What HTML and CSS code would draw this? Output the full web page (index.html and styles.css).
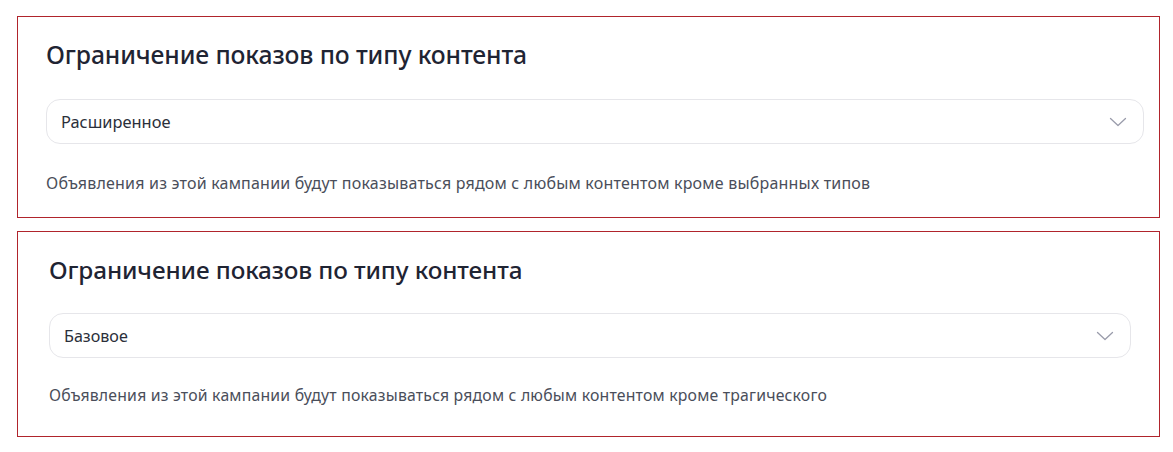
FILE: index.html
```html
<!DOCTYPE html>
<html lang="ru">
<head>
<meta charset="utf-8">
<link rel="stylesheet" href="styles.css">
</head>
<body>
<main class="page">
  <section class="card card-first">
    <h2 class="card-title">Ограничение показов по типу контента</h2>
    <div class="select">
      <span class="select-value">Расширенное</span>
      <svg class="chevron" width="18" height="10" viewBox="0 0 18 10"><polyline points="1.5,1.5 9,8.5 16.5,1.5" fill="none" stroke="#9a9cab" stroke-width="1.3" stroke-linecap="round" stroke-linejoin="round"/></svg>
    </div>
    <p class="card-note">Объявления из этой кампании будут показываться рядом с любым контентом кроме выбранных типов</p>
  </section>
  <section class="card card-second">
    <h2 class="card-title">Ограничение показов по типу контента</h2>
    <div class="select">
      <span class="select-value">Базовое</span>
      <svg class="chevron" width="18" height="10" viewBox="0 0 18 10"><polyline points="1.5,1.5 9,8.5 16.5,1.5" fill="none" stroke="#9a9cab" stroke-width="1.3" stroke-linecap="round" stroke-linejoin="round"/></svg>
    </div>
    <p class="card-note">Объявления из этой кампании будут показываться рядом с любым контентом кроме трагического</p>
  </section>
</main>
</body>
</html>
```

FILE: styles.css
```css
html, body {
  margin: 0;
  padding: 0;
  background: #ffffff;
}

body {
  font-family: "Noto Sans", "Open Sans", sans-serif;
}

.page {
  display: flex;
  flex-direction: column;
  gap: 13px;
  padding: 16px 0 0 17px;
  width: 1143px;
}

.card {
  border: 1px solid #b0242c;
  background: #ffffff;
  display: flex;
  flex-direction: column;
  box-sizing: border-box;
}

.card-title {
  margin: 0;
  line-height: 30px;
  font-weight: 500;
  color: #1f2433;
  letter-spacing: -0.1px;
}

.select {
  height: 45px;
  box-sizing: border-box;
  border: 1px solid #e6e6ea;
  border-radius: 14px;
  display: flex;
  align-items: center;
  justify-content: space-between;
  padding: 0 16px 0 14px;
}

.select-value {
  color: #2b2f3a;
}

.card-note {
  line-height: 20px;
  color: #4a4e5a;
  letter-spacing: 0.2px;
}

/* first card */
.card-first {
  height: 202px;
  padding: 23px 15px 0 28px;
}

.card-first .card-title {
  font-size: 24.7px;
}

.card-first .select {
  margin-top: 29px;
}

.card-first .select-value {
  font-size: 16.4px;
}

.card-first .card-note {
  margin: 29px 0 0 0;
  font-size: 16px;
}

/* second card (slightly smaller capture) */
.card-second {
  height: 206px;
  padding: 23px 28px 0 31px;
}

.card-second .card-title {
  font-size: 24.3px;
}

.card-second .select {
  margin-top: 28px;
  padding-left: 14px;
}

.card-second .select-value {
  font-size: 16.1px;
}

.card-second .card-note {
  margin: 27px 0 0 0;
  font-size: 15.8px;
}
```
